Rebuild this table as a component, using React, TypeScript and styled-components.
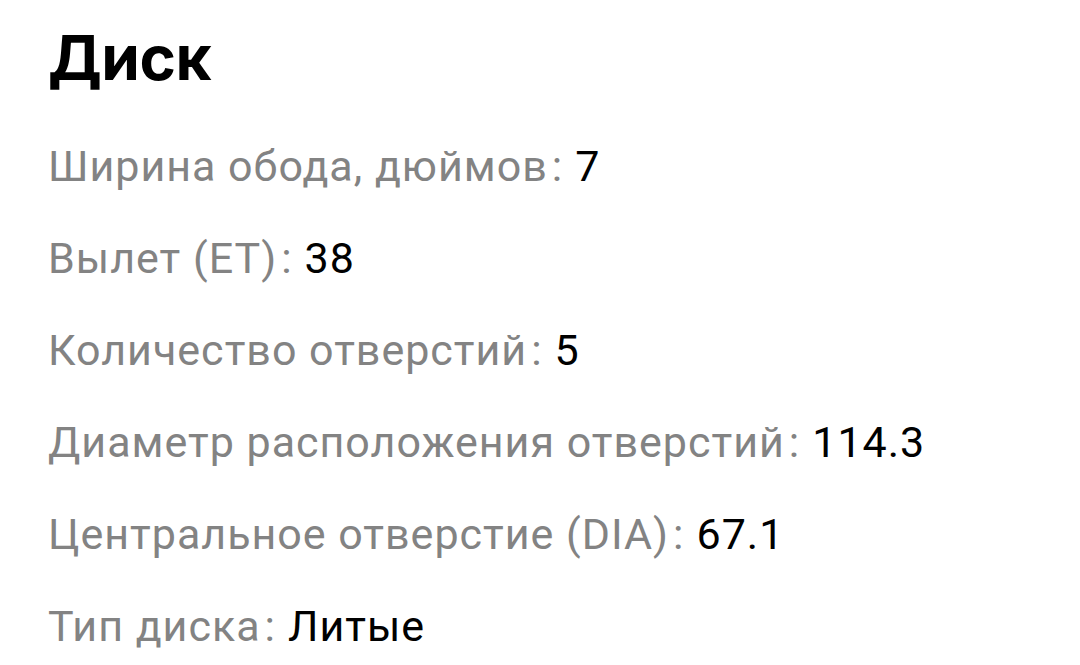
import styled, { createGlobalStyle } from "styled-components";

const GlobalStyle = createGlobalStyle`
  body {
    margin: 0;
    background: #ffffff;
    font-family: Roboto, "Noto Sans", sans-serif;
  }
`;

const specs = [
  { label: "Ширина обода, дюймов", value: "7" },
  { label: "Вылет (ET)", value: "38" },
  { label: "Количество отверстий", value: "5" },
  { label: "Диаметр расположения отверстий", value: "114.3" },
  { label: "Центральное отверстие (DIA)", value: "67.1" },
  { label: "Тип диска", value: "Литые" },
];

function App() {
  return (
    <>
      <GlobalStyle />
      <Container>
        <Title>Диск</Title>
        <List>
          {specs.map((spec) => (
            <Row key={spec.label}>
              <Label>{spec.label}</Label>
              <Colon>:</Colon>
              <Value>{spec.value}</Value>
            </Row>
          ))}
        </List>
      </Container>
    </>
  );
}

const Container = styled.div`
  padding: 18px 48px 0;
`;

const Title = styled.h1`
  margin: 0;
  font-family: Inter, Roboto, sans-serif;
  font-size: 62px;
  font-weight: 700;
  line-height: 80px;
  color: #000000;
  letter-spacing: -0.5px;
`;

const List = styled.div`
  display: flex;
  flex-direction: column;
  margin-top: 22px;
`;

const Row = styled.div`
  font-size: 43px;
  line-height: 92px;
  letter-spacing: 1px;
  white-space: nowrap;
`;

const Label = styled.span`
  color: #838383;
`;

const Colon = styled.span`
  color: #838383;
  margin: 0 12px 0 4px;
`;

const Value = styled.span`
  color: #000000;
`;

export default App;
